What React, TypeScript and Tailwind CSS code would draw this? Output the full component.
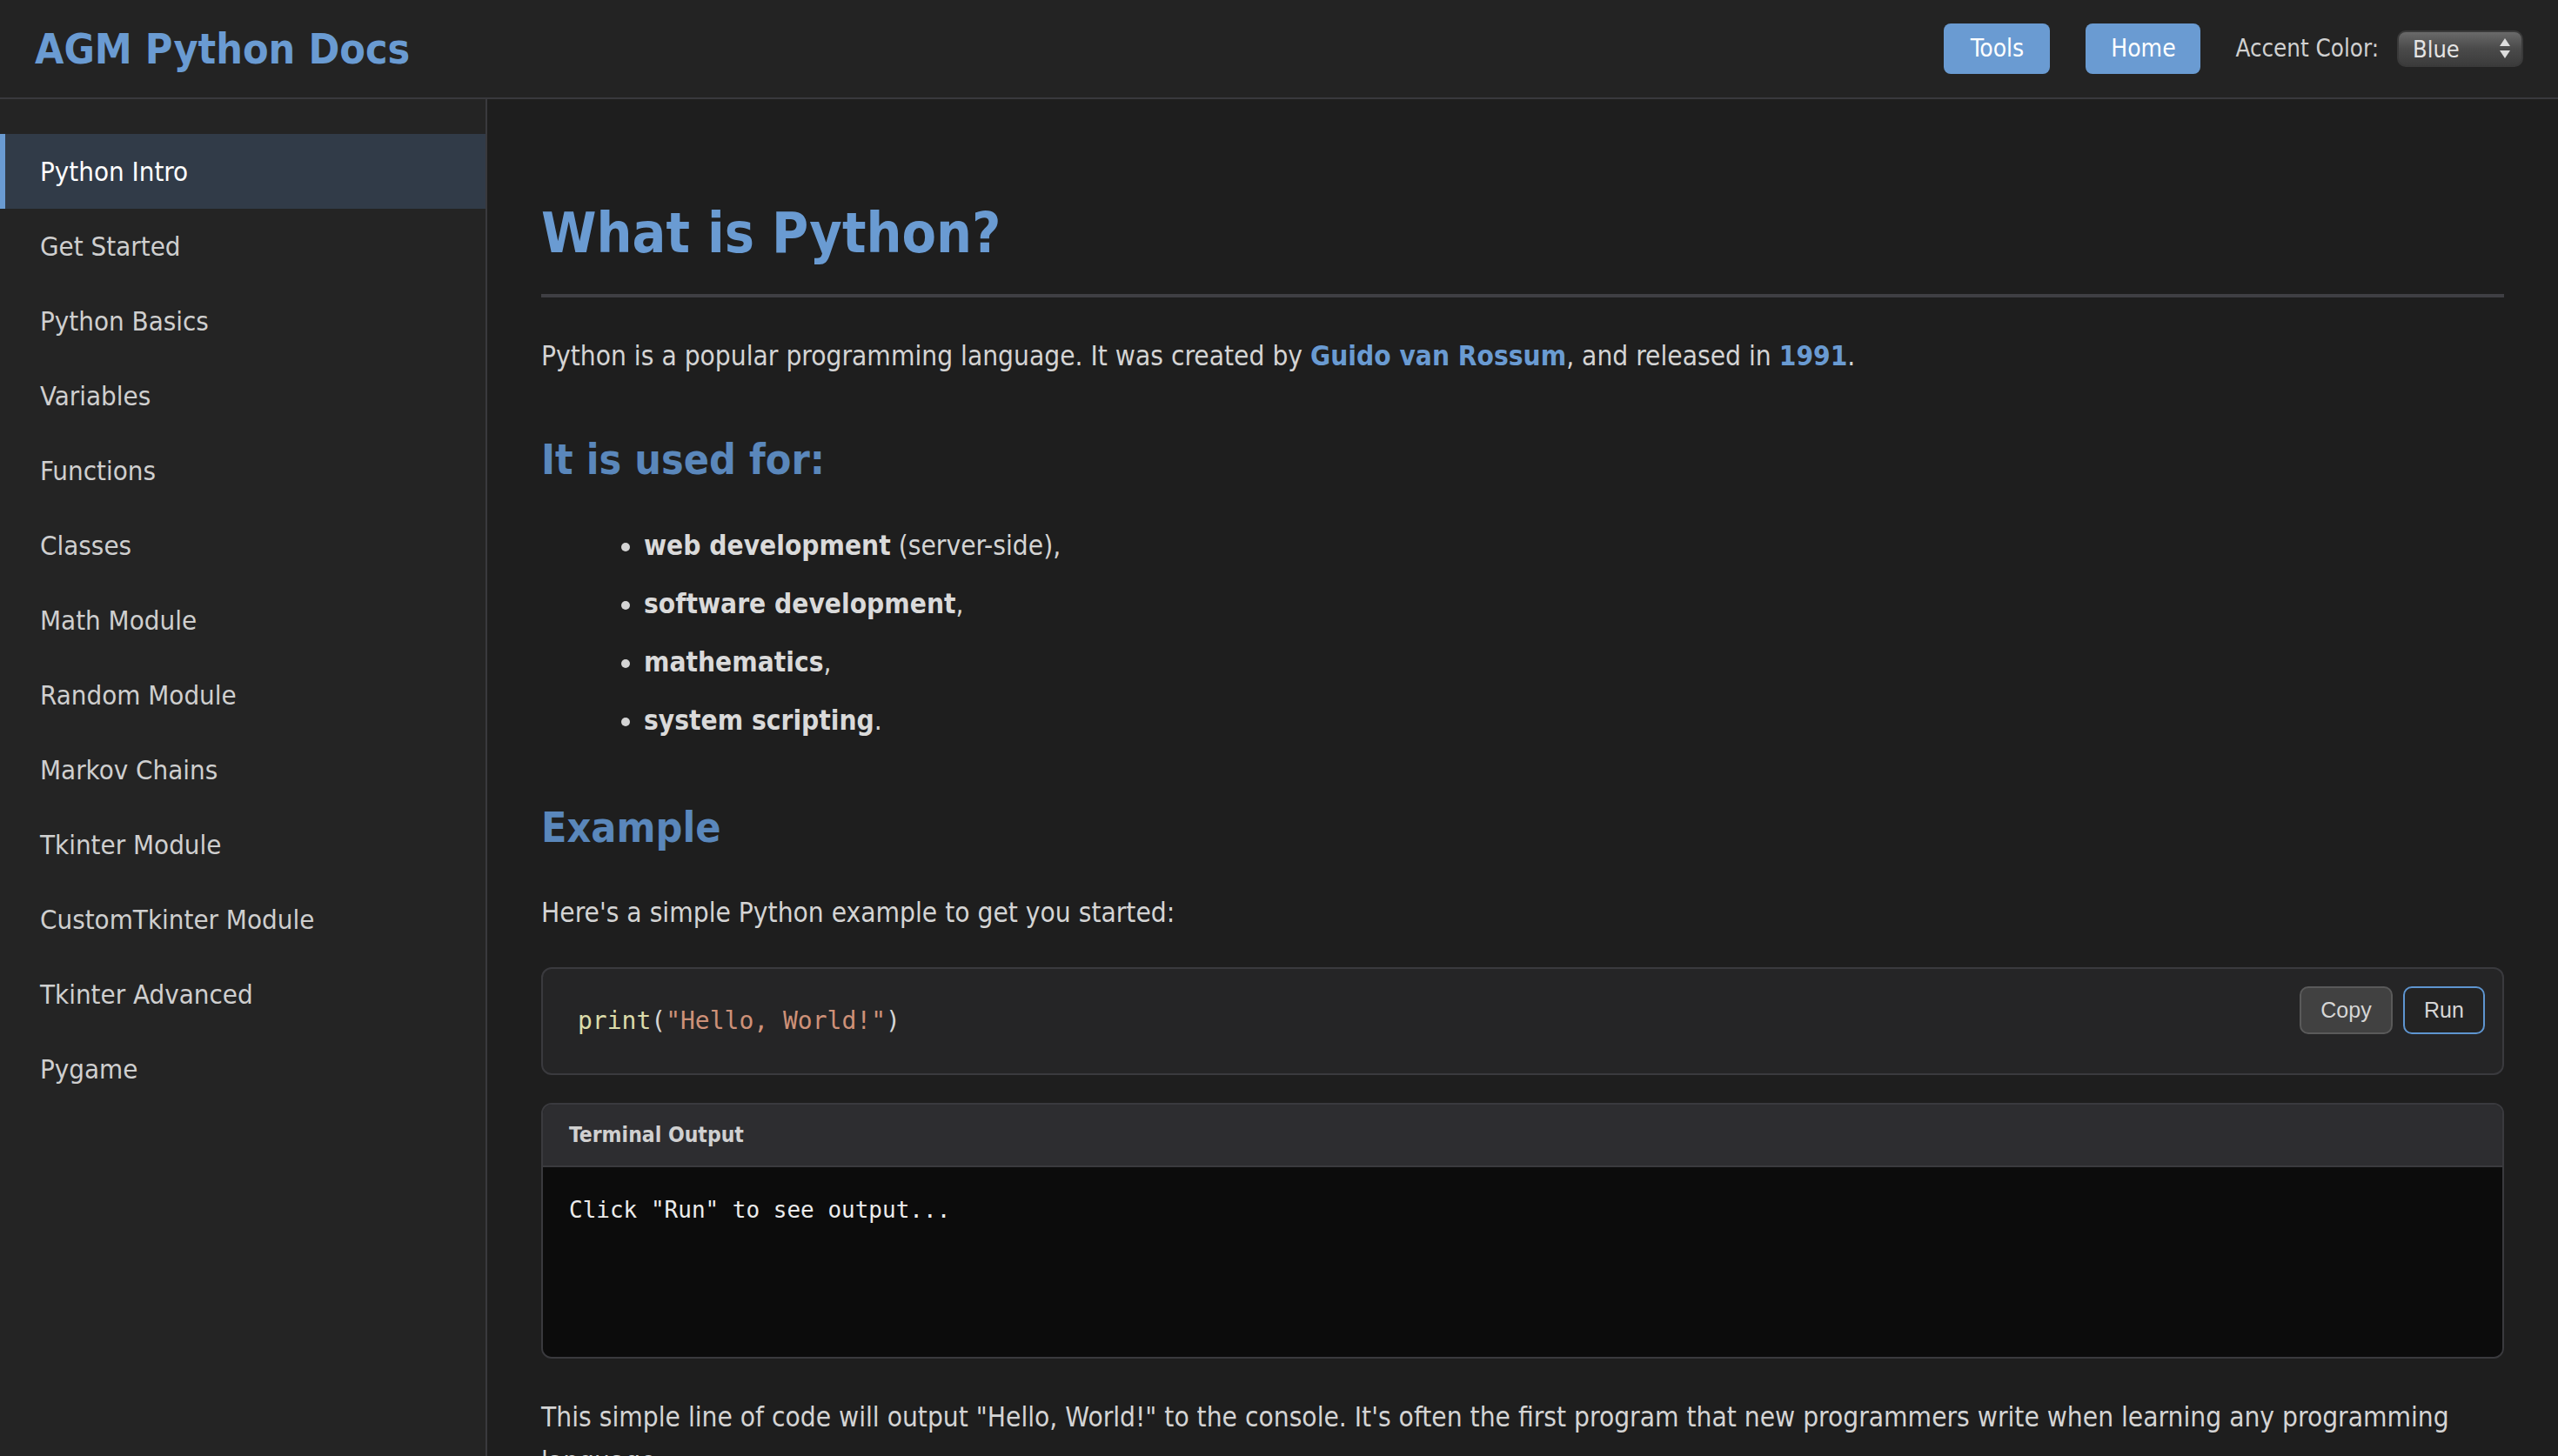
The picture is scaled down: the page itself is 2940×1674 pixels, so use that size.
import { useState } from 'react'

const NAV_ITEMS = [
  'Python Intro',
  'Get Started',
  'Python Basics',
  'Variables',
  'Functions',
  'Classes',
  'Math Module',
  'Random Module',
  'Markov Chains',
  'Tkinter Module',
  'CustomTkinter Module',
  'Tkinter Advanced',
  'Pygame',
]

const USES = [
  { bold: 'web development', rest: ' (server-side),' },
  { bold: 'software development', rest: ',' },
  { bold: 'mathematics', rest: ',' },
  { bold: 'system scripting', rest: '.' },
]

function SelectArrows() {
  return (
    <svg width="14" height="24" viewBox="0 0 14 24" className="fill-[#dcdcdc]">
      <path d="M7 0 L13 9 L1 9 Z" />
      <path d="M1 14 L13 14 L7 23 Z" />
    </svg>
  )
}

export default function App() {
  const [active, setActive] = useState('Python Intro')

  return (
    <div className="flex h-screen flex-col overflow-hidden bg-[#1e1e1e] font-['DejaVu_Sans_Condensed','DejaVu_Sans',sans-serif] text-[#d4d4d4]">
      <header className="flex h-[114px] shrink-0 items-center justify-between border-b-2 border-[#39393d] bg-[#232323] px-[40px]">
        <h1 className="text-[48px] leading-[1.5] font-bold text-[#6a9bd2]">AGM Python Docs</h1>
        <div className="flex items-center">
          <button className="h-[58px] w-[122px] rounded-[8px] bg-[#6a9bd2] text-[28px] text-white">
            Tools
          </button>
          <button className="ml-[41px] h-[58px] w-[132px] rounded-[8px] bg-[#6a9bd2] text-[28px] text-white">
            Home
          </button>
          <span className="ml-[40px] text-[27.5px] text-[#d0d0d0]">Accent Color:</span>
          <div className="ml-[21px] flex h-[42px] w-[145px] items-center justify-between rounded-[10px] border-2 border-[#3a3a3a] bg-linear-to-b from-[#6a6a6a] via-[#4a4a4a] to-[#3c3c3c] pr-[12px] pl-[16px]">
            <span className="text-[27px] leading-none text-[#e4e4e4]">Blue</span>
            <SelectArrows />
          </div>
        </div>
      </header>

      <div className="flex min-h-0 flex-1">
        <aside className="w-[560px] shrink-0 border-r-2 border-[#39393d] bg-[#242424] pt-[40px]">
          <nav className="flex flex-col">
            {NAV_ITEMS.map((item) => (
              <a
                key={item}
                href="#"
                onClick={(e) => {
                  e.preventDefault()
                  setActive(item)
                }}
                className={
                  item === active
                    ? 'border-l-[6px] border-[#6a9bd2] bg-[#313b48] py-[24px] pl-[40px] text-[31px] leading-[38px] text-white'
                    : 'border-l-[6px] border-transparent py-[24px] pl-[40px] text-[31px] leading-[38px] text-[#cfcfcf]'
                }
              >
                {item}
              </a>
            ))}
          </nav>
        </aside>

        <main className="min-w-0 flex-1 overflow-hidden px-[62px] pt-[116px]">
          <h1 className="border-b-4 border-[#3f3f44] pb-[31px] text-[64px] leading-[1.2] font-bold text-[#6a9bd2]">
            What is Python?
          </h1>
          <p className="mt-[42px] text-[31.4px] leading-[1.6]">
            Python is a popular programming language. It was created by{' '}
            <a href="#" className="font-bold text-[#6a9bd2]">
              Guido van Rossum
            </a>
            , and released in{' '}
            <a href="#" className="font-bold text-[#6a9bd2]">
              1991
            </a>
            .
          </p>

          <h2 className="mt-[66px] text-[48px] leading-[1.2] font-bold text-[#5a87bb]">It is used for:</h2>
          <ul className="mt-[44px] list-disc pl-[118px] text-[31.4px] leading-[1.6]">
            {USES.map((u) => (
              <li key={u.bold} className="mb-[17px]">
                <strong className="font-bold text-[#dadada]">{u.bold}</strong>
                {u.rest}
              </li>
            ))}
          </ul>

          <h2 className="mt-[69px] text-[48px] leading-[1.2] font-bold text-[#5a87bb]">Example</h2>
          <p className="mt-[44px] text-[31.4px] leading-[1.6]">
            Here's a simple Python example to get you started:
          </p>

          <div className="relative mt-[38px] rounded-[12px] border-2 border-[#3a3a3e] bg-[#252526] px-[40px] py-[40px]">
            <pre className="font-['DejaVu_Sans_Mono',monospace] text-[28px] leading-[40px]">
              <span className="text-[#dcdcaa]">print</span>
              <span className="text-[#d4d4d4]">(</span>
              <span className="text-[#ce9178]">"Hello, World!"</span>
              <span className="text-[#d4d4d4]">)</span>
            </pre>
            <div className="absolute top-[20px] right-[20px] flex gap-[12px] font-['Liberation_Sans',Arial,sans-serif]">
              <button className="h-[55px] w-[107px] rounded-[10px] border-2 border-[#5a5a5a] bg-[#414141] text-[25px] text-[#d6d6d6]">
                Copy
              </button>
              <button className="h-[55px] w-[94px] rounded-[10px] border-2 border-[#5e95d0] bg-[#232323] text-[25px] text-[#d6d6d6]">
                Run
              </button>
            </div>
          </div>

          <div className="mt-[32px] overflow-hidden rounded-[12px] border-2 border-[#3a3a3e]">
            <div className="flex h-[72px] items-center border-b-2 border-[#3a3a3e] bg-[#2d2d30] px-[30px]">
              <span className="text-[24.5px] font-bold text-[#d0d0d0]">Terminal Output</span>
            </div>
            <div className="h-[218px] bg-[#0c0c0c] px-[30px] pt-[30px]">
              <pre className="font-['DejaVu_Sans_Mono',monospace] text-[26px] leading-[1.5] text-[#ececec]">
                Click "Run" to see output...
              </pre>
            </div>
          </div>

          <p className="mt-[42px] text-[31.4px] leading-[1.6]">
            This simple line of code will output "Hello, World!" to the console. It's often the first program that new
            programmers write when learning any programming language.
          </p>
        </main>
      </div>
    </div>
  )
}
